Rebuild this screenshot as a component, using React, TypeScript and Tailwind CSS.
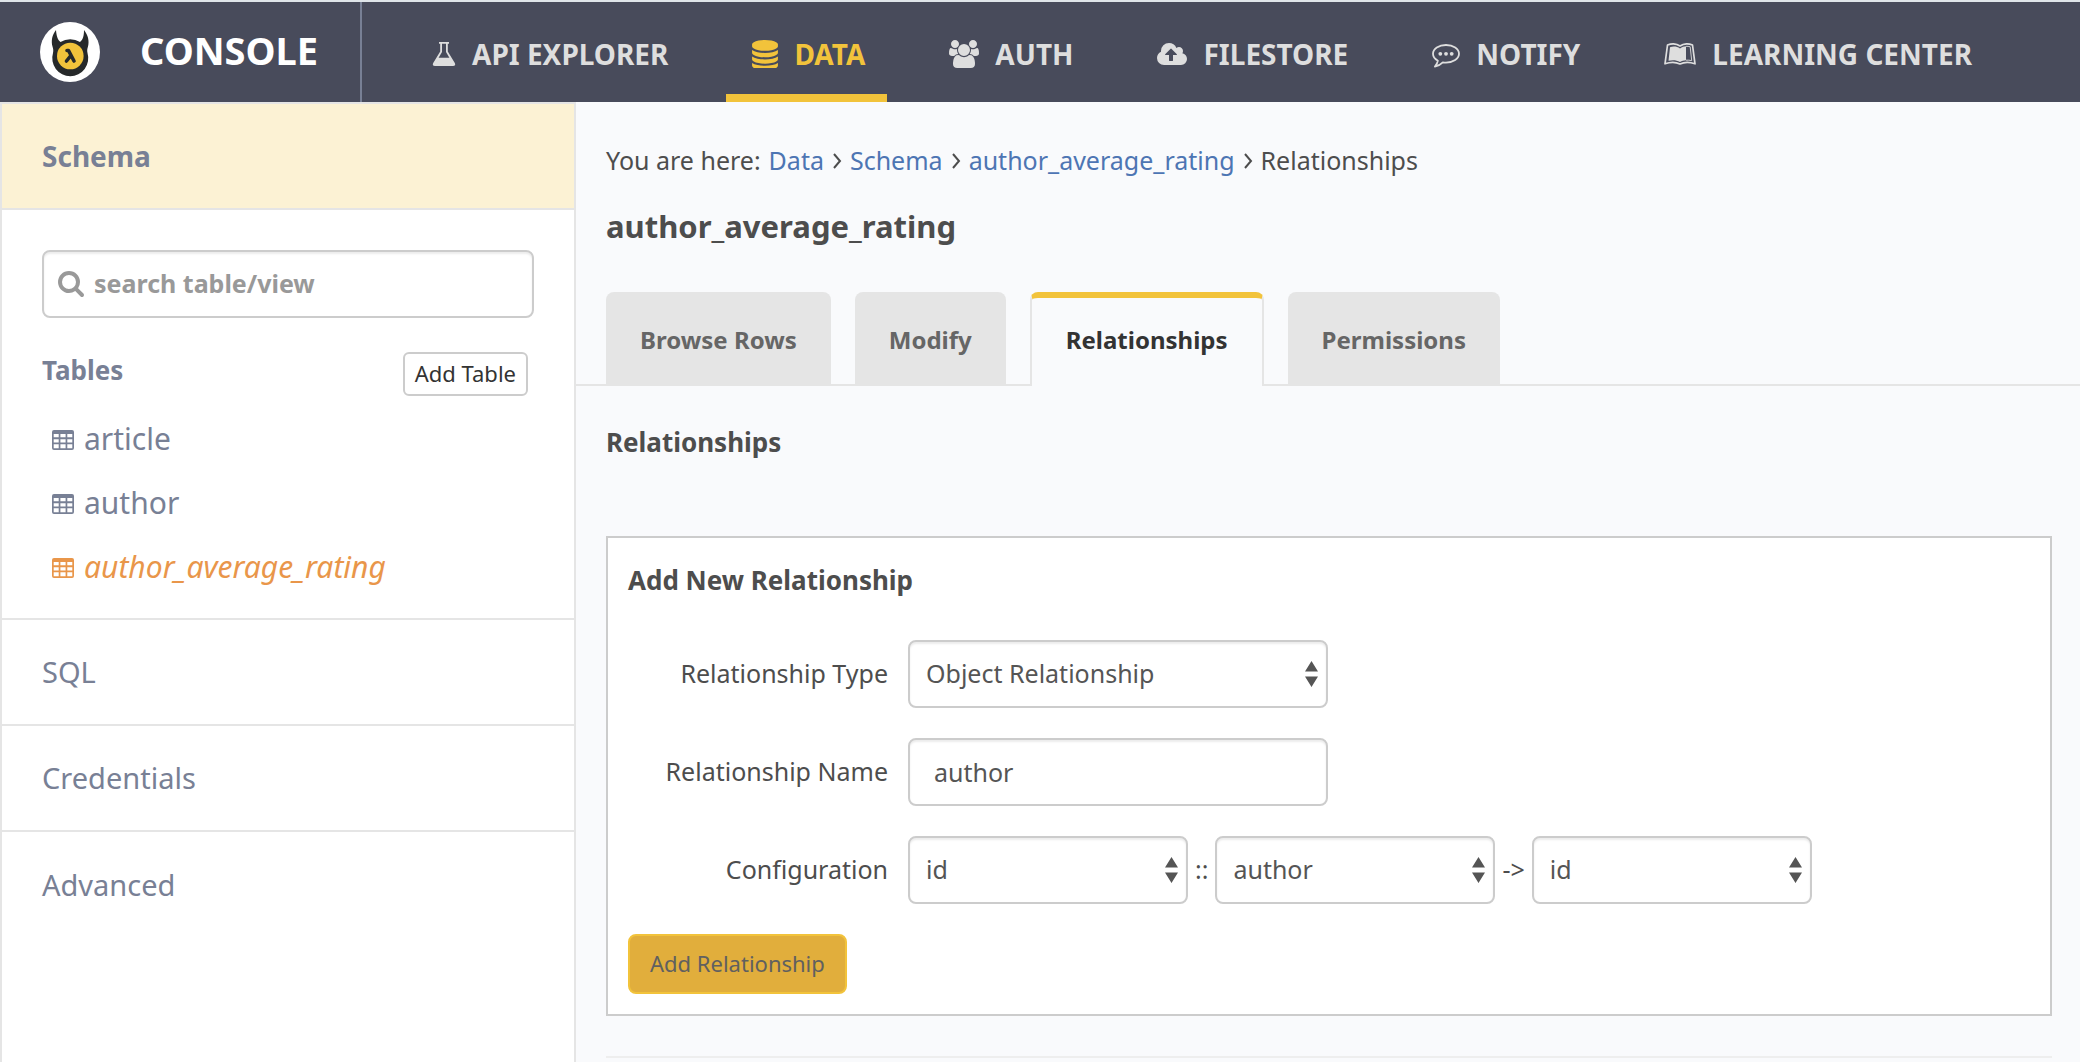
import { Fragment, useState, type ReactNode } from "react";

type GlyphProps = { className?: string };

function Logo() {
  return (
    <svg viewBox="0 0 60 60" className="size-[60px]" aria-hidden="true">
      <circle cx="30" cy="30" r="30" fill="#fff" />
      <path
        fill="#26292a"
        d="M16 8c-4 5-5 11-3.500 16.500.8 2.500 1 4 .5 6.500a18 18 0 1 0 34.500 0c-.5-2.500-.3-4 .5-6.500C49.500 19 48 13 44 8c0 6-1 9.500-4 12a18 18 0 0 0-19.500 0C17.500 17.500 16.500 14 16 8z"
      />
      <circle cx="30.300" cy="34" r="13.300" fill="#f2c33b" />
      <path d="M27 28.500h1.500l5.500 10.500M30.500 34l-4 5" fill="none" stroke="#26292a" strokeWidth="3.600" strokeLinecap="round" strokeLinejoin="round" />
    </svg>
  );
}

function FlaskIcon() {
  return (
    <svg viewBox="0 0 24 24" className="h-6 w-6" aria-hidden="true">
      <path
        fill="currentColor"
        fillRule="evenodd"
        d="M7 0h10v1.800h-1.200v7.700l7 11.500c1 1.800.1 3-1.800 3H3c-1.900 0-2.800-1.200-1.800-3l7-11.500V1.800H7zM10 1.800v8.200L6.600 15.800h10.800L14 10V1.800z"
      />
    </svg>
  );
}

function DatabaseIcon() {
  return (
    <svg viewBox="0 0 1536 1664" className="h-7 w-[26px]" aria-hidden="true">
      <path
        fill="currentColor"
        d="M768 768q237 0 443-43t325-127v170q0 69-103 128t-280 93.500-385 34.500-385-34.500-280-93.500-103-128v-170q119 84 325 127t443 43zM768 1536q237 0 443-43t325-127v170q0 69-103 128t-280 93.500-385 34.500-385-34.500-280-93.500-103-128v-170q119 84 325 127t443 43zM768 1152q237 0 443-43t325-127v170q0 69-103 128t-280 93.500-385 34.500-385-34.500-280-93.500-103-128v-170q119 84 325 127t443 43zM768 0q208 0 385 34.500t280 93.500 103 128v128q0 69-103 128t-280 93.500-385 34.500-385-34.500-280-93.500-103-128v-128q0-69 103-128t280-93.500 385-34.500z"
      />
    </svg>
  );
}

function UsersIcon() {
  return (
    <svg viewBox="0 0 1920 1792" className="h-7 w-[30px]" aria-hidden="true">
      <path
        fill="currentColor"
        d="M593 896q-162 5-265 128h-134q-82 0-138-40.500t-56-118.500q0-353 124-353 6 0 43.500 21t97.500 42.500 119 21.500q67 0 133-23-5 37-5 66 0 139 81 256zM1664 1533q0 120-73 189.500t-194 69.500h-874q-121 0-194-69.500t-73-189.500q0-53 3.500-103.500t14-109 26.500-108.500 43-97.500 62-81 85.500-53.500 111.500-20q10 0 43 21.500t73 48 107 48 135 21.500 135-21.500 107-48 73-48 43-21.500q61 0 111.500 20t85.500 53.500 62 81 43 97.500 26.500 108.500 14 109 3.500 103.500zM640 256q0 106-75 181t-181 75-181-75-75-181 75-181 181-75 181 75 75 181zM1344 640q0 159-112.500 271.500t-271.500 112.500-271.500-112.500-112.500-271.500 112.500-271.500 271.500-112.500 271.500 112.500 112.500 271.500zM1920 865q0 78-56 118.500t-138 40.500h-134q-103-123-265-128 81-117 81-256 0-29-5-66 66 23 133 23 59 0 119-21.500t97.500-42.500 43.500-21q124 0 124 353zM1792 256q0 106-75 181t-181 75-181-75-75-181 75-181 181-75 181 75 75 181z"
      />
    </svg>
  );
}

function CloudUploadIcon() {
  return (
    <svg viewBox="0 128 1920 1408" className="h-[22px] w-[30px]" aria-hidden="true">
      <path
        fill="currentColor"
        d="M1280 864q0-14-9-23l-352-352q-9-9-23-9t-23 9l-351 351q-10 12-10 24 0 14 9 23t23 9h224v352q0 13 9.500 22.500t22.500 9.500h192q13 0 22.500-9.500t9.500-22.500v-352h224q13 0 22.500-9.500t9.500-22.500zM1920 1152q0 159-112.500 271.500t-271.500 112.500h-1088q-185 0-316.500-131.500t-131.500-316.500q0-130 70-240t188-165q-2-30-2-43 0-212 150-362t362-150q156 0 285.500 87t188.500 231q71-62 166-62 106 0 181 75t75 181q0 76-41 138 130 31 213.500 135.500t83.500 238.500z"
      />
    </svg>
  );
}

function CommentIcon() {
  return (
    <svg viewBox="0 0 28 24" className="mt-1 h-6 w-7" aria-hidden="true">
      <path
        d="M14 1C6.800 1 1 4.900 1 9.800c0 2.900 1.900 5.300 4.900 6.900-.4 2.300-1.400 4.100-3 5.900 3.400-.7 5.800-2.200 7.900-4.300 1 .2 2.100.3 3.200.3 7.200 0 13-3.900 13-8.800S21.200 1 14 1z"
        fill="none"
        stroke="currentColor"
        strokeWidth="1.800"
        strokeLinejoin="round"
      />
      <circle cx="8.300" cy="9.800" r="1.900" fill="currentColor" />
      <circle cx="14" cy="9.800" r="1.900" fill="currentColor" />
      <circle cx="19.700" cy="9.800" r="1.900" fill="currentColor" />
    </svg>
  );
}

function BookIcon() {
  return (
    <svg viewBox="0 0 32 22" className="h-[22px] w-8" aria-hidden="true">
      <path
        d="M3.500 2C7.500.5 12.500.5 16 3 19.500.5 24.500.5 28.500 2L31 20.800c-5-1.800-11-1.800-15 .2-4-2-10-2-15-.2z"
        fill="none"
        stroke="currentColor"
        strokeWidth="1.700"
        strokeLinejoin="round"
      />
      <path d="M6 4.200c3.500-1 7-.8 10 1.300 2-1.500 4-2.100 6-2.200v13.900c-2.200.1-4.200.6-6 1.800-3.500-2-7.500-2.200-11.500-1.200z" fill="currentColor" />
      <path d="M22 3.300c1.400-.1 2.800.1 4.200.5l1.500 13.800c-1.900-.4-3.800-.6-5.700-.4" fill="none" stroke="currentColor" strokeWidth="0.900" />
    </svg>
  );
}

function SearchIcon({ className }: GlyphProps) {
  return (
    <svg viewBox="0 0 1664 1664" className={className} aria-hidden="true">
      <path
        fill="currentColor"
        d="M1152 704q0-185-131.500-316.500t-316.500-131.500-316.500 131.500-131.500 316.500 131.500 316.500 316.500 131.500 316.500-131.500 131.500-316.500zM1664 1536q0 52-38 90t-90 38q-54 0-90-38l-343-342q-179 124-399 124-143 0-273.500-55.500t-225-150-150-225-55.500-273.500 55.500-273.500 150-225 225-150 273.500-55.500 273.500 55.500 225 150 150 225 55.500 273.500q0 220-124 399l343 343q37 37 37 90z"
      />
    </svg>
  );
}

function TableIcon() {
  return (
    <svg viewBox="0 0 22 20" className="mt-1 h-5 w-[22px]" aria-hidden="true">
      <path
        fill="currentColor"
        fillRule="evenodd"
        d="M2 0h18a2 2 0 0 1 2 2v16a2 2 0 0 1-2 2H2a2 2 0 0 1-2-2V2a2 2 0 0 1 2-2zM1.700 4v3.300h5V4zM8.400 4v3.300h5.200V4zM15.300 4v3.300h5V4zM1.700 9.200v3.300h5V9.200zM8.400 9.200v3.300h5.200V9.200zM15.300 9.200v3.300h5V9.200zM1.700 14.300v3.900h5v-3.900zM8.400 14.300v3.900h5.200v-3.900zM15.300 14.300v3.900h5v-3.900z"
      />
    </svg>
  );
}

function ChevronIcon() {
  return (
    <svg viewBox="0 0 10 16" className="mt-0.5 h-4 w-2.5" aria-hidden="true">
      <path d="M2 1l6 7-6 7" fill="none" stroke="currentColor" strokeWidth="2" />
    </svg>
  );
}

const navItems: { label: string; icon: ReactNode; active?: boolean }[] = [
  { label: "API EXPLORER", icon: <FlaskIcon /> },
  { label: "DATA", icon: <DatabaseIcon />, active: true },
  { label: "AUTH", icon: <UsersIcon /> },
  { label: "FILESTORE", icon: <CloudUploadIcon /> },
  { label: "NOTIFY", icon: <CommentIcon /> },
  { label: "LEARNING CENTER", icon: <BookIcon /> },
];

function Header() {
  return (
    <header className="flex h-[102px] border-t-2 border-[#dfe5e9] bg-[#484b5b]">
      <a href="#console" className="flex w-[362px] shrink-0 items-center gap-10 border-r-2 border-[#788095] pl-10 text-[38px] font-bold text-white">
        <Logo />
        <span className="pb-1">CONSOLE</span>
      </a>
      <nav className="ml-11 flex gap-9">
        {navItems.map((item) => (
          <a
            key={item.label}
            href={`#${item.label.toLowerCase()}`}
            className={`flex items-center gap-4 border-y-8 border-t-transparent pt-1 pr-[22px] pl-[26px] text-[28px] font-bold whitespace-nowrap ${
              item.active ? "border-b-[#f2c33b] text-[#f2c33b]" : "border-b-transparent text-[#dedede]"
            }`}
          >
            {item.icon}
            {item.label}
          </a>
        ))}
      </nav>
    </header>
  );
}

const tables = ["article", "author", "author_average_rating"];

function Sidebar() {
  return (
    <aside className="w-[576px] shrink-0 border-x-2 border-t-2 border-[#e5e5e5] bg-white text-[29px] text-[#788095]">
      <a href="#schema" className="flex h-[106px] items-center border-b-2 border-[#e5e5e5] bg-[#fcf2d4] px-10 text-[28px] font-bold">
        Schema
      </a>
      <div className="border-b-2 border-[#e5e5e5] px-10 pt-10 pb-5">
        <label className="flex h-[68px] items-center gap-2.5 rounded-lg border-2 border-[#ccc] px-3.5 text-[#999] shadow-[inset_0_2px_2px_rgba(0,0,0,0.08)]">
          <SearchIcon className="size-[26px]" />
          <input
            type="text"
            aria-label="search table/view"
            placeholder="search table/view"
            className="min-w-0 flex-1 bg-transparent text-[25px] font-bold outline-none placeholder:text-[#999]"
          />
        </label>
        <div className="mt-[34px] flex items-start justify-between pr-1.5">
          <h2 className="text-[26px] leading-9 font-bold">Tables</h2>
          <button type="button" className="h-11 rounded-md border-2 border-[#ccc] bg-white px-2.5 pb-0.5 text-[22px] leading-none text-[#333]">
            Add Table
          </button>
        </div>
        <ul className="mt-2.5 pl-2.5">
          {tables.map((name, i) => (
            <li key={name}>
              <a href={`#${name}`} className={`flex h-16 items-center gap-2.5 text-[30px] ${i === 2 ? "text-[#e9964a] italic" : ""}`}>
                <TableIcon />
                {name}
              </a>
            </li>
          ))}
        </ul>
      </div>
      <a href="#sql" className="flex h-[106px] items-center border-b-2 border-[#e5e5e5] px-10">SQL</a>
      <a href="#credentials" className="flex h-[106px] items-center border-b-2 border-[#e5e5e5] px-10">Credentials</a>
      <a href="#advanced" className="flex h-[106px] items-center px-10">Advanced</a>
    </aside>
  );
}

const tabs = ["Browse Rows", "Modify", "Relationships", "Permissions"];

function Tabs() {
  return (
    <div role="tablist" className="flex gap-6 border-b-2 border-[#e5e5e5] pl-[30px]">
      {tabs.map((tab) => (
        <button
          key={tab}
          type="button"
          role="tab"
          aria-selected={tab === "Relationships"}
          className={`-mb-0.5 h-[94px] rounded-t-lg text-[24px] font-bold ${
            tab === "Relationships"
              ? "border-x-2 border-t-6 border-x-[#e5e5e5] border-t-[#f2c33b] bg-[#f9fafc] px-[34px] pb-1 text-[#333]"
              : "bg-[#e5e5e5] px-[34px] pt-0.5 text-[#666]"
          }`}
        >
          {tab}
        </button>
      ))}
    </div>
  );
}

function Select({ id, label, options, className }: { id?: string; label?: string; options: string[]; className: string }) {
  return (
    <div className={`relative ${className}`}>
      <select
        id={id}
        aria-label={label}
        className="h-[68px] w-full appearance-none rounded-lg border-2 border-[#ccc] bg-white pr-8 pl-4 text-[#555] shadow-[inset_0_2px_2px_rgba(0,0,0,0.08)] outline-none"
      >
        {options.map((o) => (
          <option key={o}>{o}</option>
        ))}
      </select>
      <svg viewBox="0 0 13 26" className="pointer-events-none absolute top-[21px] right-2.5 h-[26px] w-[13px]" aria-hidden="true">
        <path fill="#555" d="M6.500 0L13 10.500H0zM6.500 26L0 15.500h13z" />
      </svg>
    </div>
  );
}

function RelationshipForm() {
  const [name, setName] = useState("author");
  return (
    <form className="mt-[76px] border-2 border-[#ccc] bg-white px-5 pt-6 pb-5">
      <h3 className="text-[26px] leading-9 font-bold">Add New Relationship</h3>
      <div className="mt-[42px] grid grid-cols-[260px_1fr] items-center gap-x-5 gap-y-[30px]">
        <label htmlFor="rel-type" className="text-right">Relationship Type</label>
        <Select id="rel-type" options={["Object Relationship", "Array Relationship"]} className="w-[420px]" />
        <label htmlFor="rel-name" className="text-right">Relationship Name</label>
        <input
          id="rel-name"
          type="text"
          value={name}
          onChange={(e) => setName(e.target.value)}
          className="h-[68px] w-[420px] rounded-lg border-2 border-[#ccc] bg-white px-6 text-[#555] shadow-[inset_0_2px_2px_rgba(0,0,0,0.08)] outline-none"
        />
        <label htmlFor="rel-column" className="text-right">Configuration</label>
        <div className="flex items-center gap-[7px]">
          <Select id="rel-column" options={["id"]} className="w-[280px]" />
          <span>::</span>
          <Select label="Reference table" options={["author", "article"]} className="w-[280px]" />
          <span>-&gt;</span>
          <Select label="Reference column" options={["id"]} className="w-[280px]" />
        </div>
      </div>
      <button type="button" className="mt-[30px] block h-[60px] rounded-lg border-2 border-[#f2c33b] bg-[#e1ae3c] px-5 pb-0.5 text-[22px] text-[#606060]">
        Add Relationship
      </button>
    </form>
  );
}

const crumbs = ["Data", "Schema", "author_average_rating"];

export default function App() {
  return (
    <div className="flex min-h-screen flex-col bg-[#f9fafc] font-['Noto_Sans',sans-serif] text-[25px] text-[#4d4d4d]">
      <Header />
      <div className="flex flex-1">
        <Sidebar />
        <main className="min-w-0 flex-1">
          <nav aria-label="Breadcrumb" className="mt-10 flex items-center gap-2 pl-[30px] leading-9">
            <span>You are here:</span>
            {crumbs.map((c) => (
              <Fragment key={c}>
                <a href={`#${c}`} className="text-[#4d75b3]">{c}</a>
                <ChevronIcon />
              </Fragment>
            ))}
            <span>Relationships</span>
          </nav>
          <h1 className="mt-7 mb-[46px] pl-[30px] text-[31px] leading-10 font-bold">author_average_rating</h1>
          <Tabs />
          <div className="pr-7 pl-[30px]">
            <h2 className="mt-[38px] text-[26px] leading-9 font-bold">Relationships</h2>
            <RelationshipForm />
            <hr className="mt-10 border-t-2 border-[#eeeeee]" />
          </div>
        </main>
      </div>
    </div>
  );
}
